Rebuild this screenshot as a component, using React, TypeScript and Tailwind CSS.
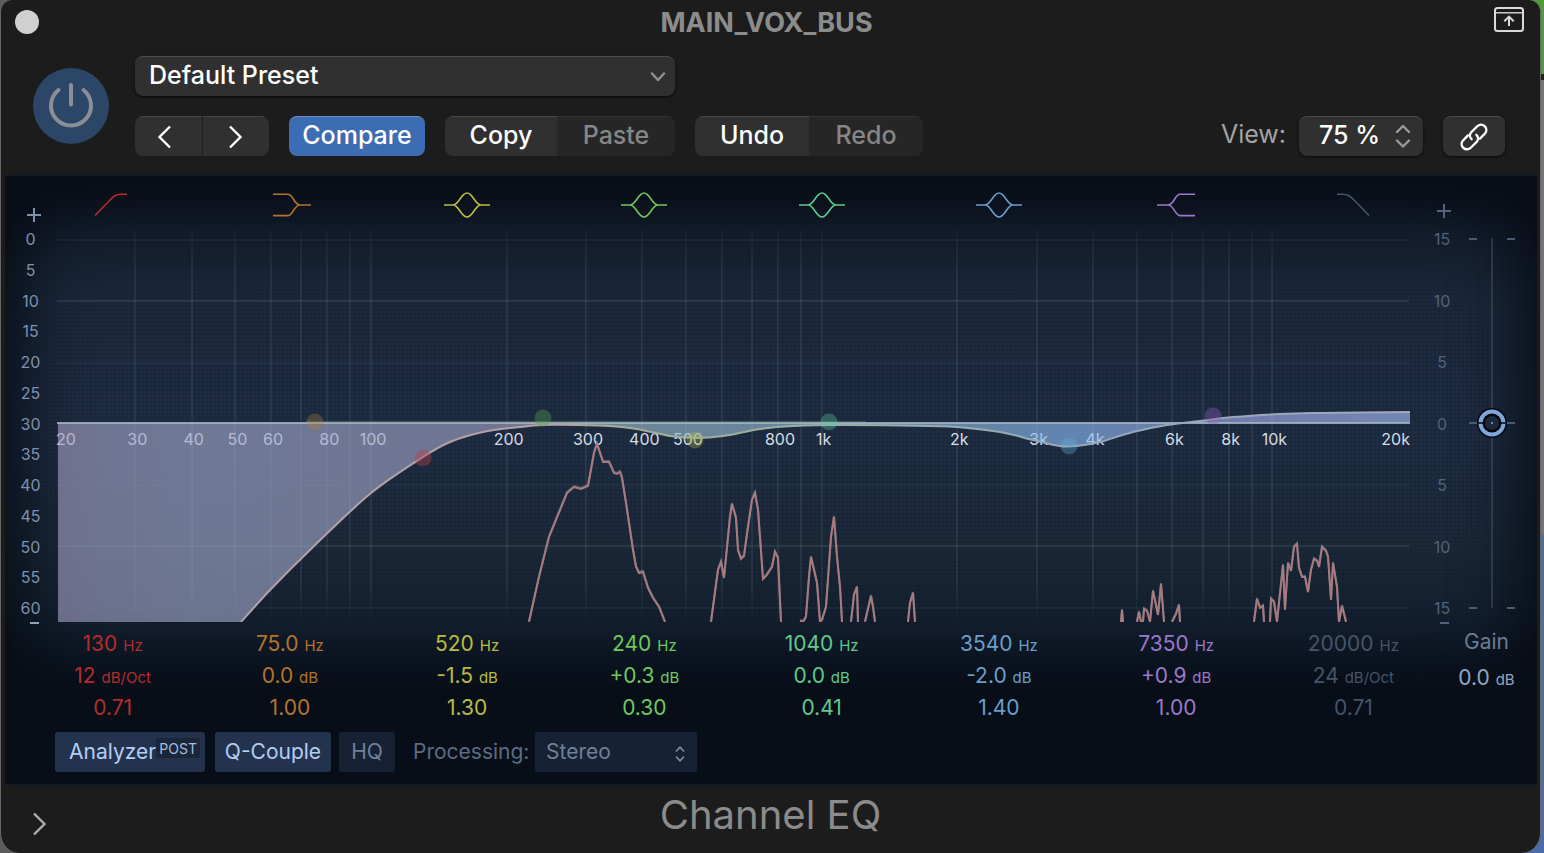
import { useState } from "react";
import type { ReactNode } from "react";

type Point = [number, number];

// Plot is drawn in a 1354 x 392 box, three decades wide (20 Hz - 20 kHz)
const PLOT_W = 1354;
const PLOT_H = 392;
const ZERO_Y = 193;

const freqX = (f: number) => (Math.log10(f / 20) / 3) * 1352;

const gridFreqs = [
  30, 40, 50, 60, 70, 80, 90, 100, 200, 300, 400, 500, 600, 700, 800, 900, 1000,
  2000, 3000, 4000, 5000, 6000, 7000, 8000, 9000, 10000,
];

const freqLabels = [
  30, 40, 50, 60, 80, 100, 200, 300, 400, 500, 800, 1000, 2000, 3000, 4000, 6000, 8000, 10000,
];

const leftScale = [0, 5, 10, 15, 20, 25, 30, 35, 40, 45, 50, 55, 60];
const rightScale = [15, 10, 5, 0, 5, 10, 15];

const bands = [
  { shape: "lowcut", color: "text-[#b32d2d]", freq: "130", gain: "12", unit: "dB/Oct", q: "0.71" },
  { shape: "lowshelf", color: "text-[#b5742c]", freq: "75.0", gain: "0.0", unit: "dB", q: "1.00" },
  { shape: "bell", color: "text-[#b9bd42]", freq: "520", gain: "-1.5", unit: "dB", q: "1.30" },
  { shape: "bell", color: "text-[#6fc95a]", freq: "240", gain: "+0.3", unit: "dB", q: "0.30" },
  { shape: "bell", color: "text-[#5fc98f]", freq: "1040", gain: "0.0", unit: "dB", q: "0.41" },
  { shape: "bell", color: "text-[#6a9fcb]", freq: "3540", gain: "-2.0", unit: "dB", q: "1.40" },
  { shape: "highshelf", color: "text-[#9b78cc]", freq: "7350", gain: "+0.9", unit: "dB", q: "1.00" },
  { shape: "highcut", color: "text-[#465468]", freq: "20000", gain: "24", unit: "dB/Oct", q: "0.71" },
];

const handles = [
  { x: 259, y: 192, color: "#b5803c", opacity: 0.32 },
  { x: 367, y: 228, color: "#b84048", opacity: 0.4 },
  { x: 487, y: 188, color: "#4f9a4a", opacity: 0.4 },
  { x: 639, y: 210, color: "#b9bd42", opacity: 0.32 },
  { x: 773, y: 192, color: "#5fc9a0", opacity: 0.34 },
  { x: 1013, y: 216, color: "#6aaedb", opacity: 0.34 },
  { x: 1157, y: 186, color: "#8a60b8", opacity: 0.38 },
];

// Sum of all bands
const curve: Point[] = [
  [185, 392], [215, 359], [257, 317], [315, 263], [367, 227], [394, 212], [427, 202], [464, 197],
  [487, 195], [521, 195], [554, 196], [581, 199], [614, 206], [641, 208], [667, 206], [704, 199],
  [737, 196], [787, 195], [874, 196], [901, 197], [944, 202], [977, 210], [1004, 216], [1021, 216],
  [1044, 212], [1077, 202], [1111, 195], [1144, 191], [1177, 187], [1224, 184], [1264, 183], [1354, 182],
];

const spectrum: string[] = [
  "473,392 483,347 493,307 511,263 518,257 525,259 532,256 538,223 541,214 547,232 553,232 558,243 561,244 564,242 566,248 570,273 577,320 580,337 583,343 587,342 592,358 597,368 603,377 609,392",
  "655,392 662,340 665,332 668,348 674,287 676,274 680,288 682,320 685,329 688,326 692,297 696,270 699,263 702,280 707,349 710,346 716,337 719,322 722,328 725,392",
  "744,391 747,392 750,387 753,347 755,327 761,353 764,392 766,390 770,377 775,307 778,287 781,327 784,357 786,392",
  "795,392 798,365 801,357 802,392",
  "809,392 815,366 817,377 819,392",
  "852,392 854,373 857,363 859,392",
  "1065,392 1066,380 1067,392",
  "1081,392 1083,382 1085,392 1087,392 1088,379 1091,381 1094,392 1097,361 1102,385 1105,354 1108,392",
  "1116,392 1120,384 1123,375 1124,392",
  "1198,392 1201,369 1204,378 1207,376 1208,392",
  "1214,392 1215,369 1218,372 1221,392 1227,335 1229,380 1232,333 1235,341 1238,317 1241,314 1243,338 1246,347 1249,347 1252,362 1255,340 1258,329 1261,331 1263,337 1266,317 1270,321 1272,327 1275,370 1277,333 1281,357 1283,392 1286,376 1290,392",
];

function labelFor(f: number) {
  return f >= 1000 ? `${f / 1000}k` : `${f}`;
}

// Catmull-Rom through the points, written as cubic segments
function smooth(points: Point[]) {
  return points
    .slice(1)
    .map((p, i) => {
      const p0 = points[Math.max(i - 1, 0)];
      const p1 = points[i];
      const p3 = points[Math.min(i + 2, points.length - 1)];
      const c1 = [p1[0] + (p[0] - p0[0]) / 6, p1[1] + (p[1] - p0[1]) / 6];
      const c2 = [p[0] - (p3[0] - p1[0]) / 6, p[1] - (p3[1] - p1[1]) / 6];
      return `C${c1.join(" ")} ${c2.join(" ")} ${p.join(" ")}`;
    })
    .join("");
}

function BandIcon({ shape }: { shape: string }) {
  const props = { fill: "none", stroke: "currentColor", strokeWidth: 1.6, height: 26 };
  if (shape === "lowcut")
    return <svg width="38" viewBox="0 0 38 26" {...props}><path d="M1 23.5 15 9C20 4 22 2.3 27 2.3H33" /></svg>;
  if (shape === "highcut")
    return <svg width="34" viewBox="0 0 34 26" {...props}><path d="M33 23.5 19 9C14 4 12 2.3 7 2.3H1" /></svg>;
  if (shape === "lowshelf")
    return (
      <svg width="44" viewBox="-4 0 44 26" {...props}>
        <path d="M1 2.3H16C21 2.3 22 13 28 13H39M1 23.6H16C21 23.6 22 13 28 13" />
      </svg>
    );
  if (shape === "highshelf")
    return (
      <svg width="40" viewBox="0 0 40 26" {...props}>
        <path d="M39 2.3H24C19 2.3 18 13 12 13H1M39 23.6H24C19 23.6 18 13 12 13" />
      </svg>
    );
  return (
    <svg width="46" viewBox="0 0 46 26" {...props}>
      <path d="M0 13H9C15 13 17 1 23 1S31 13 37 13H46M9 13C15 13 17 25 23 25S31 13 37 13" />
    </svg>
  );
}

function Segment({ children, label, dim }: { children: ReactNode; label?: string; dim?: boolean }) {
  return (
    <button
      aria-label={label}
      className={
        dim
          ? "flex h-10 flex-1 items-center justify-center border-t border-[#333] bg-[#262626] pb-[2px] text-[#868686]"
          : "flex h-10 flex-1 items-center justify-center border-t border-[#474747] bg-[#303030] pb-[2px] text-white"
      }
    >
      {children}
    </button>
  );
}

function Header() {
  const [preset, setPreset] = useState("Default Preset");
  return (
    <div className="flex gap-[26px] pt-3 pr-[35px] pl-8 text-[25px] font-medium">
      <button aria-label="Power" className="mt-3 flex size-[76px] items-center justify-center rounded-full bg-[#2c4668]">
        <svg width="48" height="48" viewBox="0 0 48 48" fill="none" stroke="#8b8f95" strokeWidth="4" strokeLinecap="round">
          <path d="M24 3V22.5M11.5 8A20 20 0 1 0 36.5 8" />
        </svg>
      </button>
      <div className="flex flex-1 flex-col gap-5">
        <div className="relative w-[540px]">
          <select
            aria-label="Preset"
            value={preset}
            onChange={(e) => setPreset(e.target.value)}
            className="h-10 w-full appearance-none rounded-lg border-t border-[#4c4c4c] bg-[#303030] pb-[2px] pl-[14px] text-white shadow-sm shadow-black/60"
          >
            <option>Default Preset</option>
          </select>
          <svg className="pointer-events-none absolute top-4 right-[9px]" width="16" height="10" viewBox="0 0 16 10" fill="none" stroke="#929292" strokeWidth="2.4" strokeLinecap="round" strokeLinejoin="round">
            <path d="M2 1.5 8 8 14 1.5" />
          </svg>
        </div>
        <div className="flex items-center gap-5">
          <div className="flex w-[134px] gap-px overflow-hidden rounded-lg bg-[#202020]">
            <Segment label="Previous preset">
              <svg width="16" height="24" viewBox="0 0 16 24" fill="none" stroke="currentColor" strokeWidth="2.4" className="mt-[2px] ml-[-8px]">
                <path d="M14 1.5 3.5 12 14 22.5" />
              </svg>
            </Segment>
            <Segment label="Next preset">
              <svg width="16" height="24" viewBox="0 0 16 24" fill="none" stroke="currentColor" strokeWidth="2.4" className="mt-[2px]">
                <path d="M2 1.5 12.500 12 2 22.5" />
              </svg>
            </Segment>
          </div>
          <button className="h-10 w-[136px] rounded-lg border-t border-[#6a90c8] bg-[#3c6cb4] pb-[2px] text-white">Compare</button>
          <div className="grid w-[230px] grid-cols-[112px_118px] overflow-hidden rounded-lg">
            <Segment>Copy</Segment>
            <Segment dim>Paste</Segment>
          </div>
          <div className="grid w-[228px] grid-cols-2 overflow-hidden rounded-lg">
            <Segment>Undo</Segment>
            <Segment dim>Redo</Segment>
          </div>
          <div className="ml-auto flex items-center gap-[13px]">
            <label htmlFor="view" className="pb-[2px] font-normal text-[#a3a3a3]">View:</label>
            <div className="relative">
              <select
                id="view"
                className="h-10 w-[124px] appearance-none rounded-lg border-t border-[#4c4c4c] bg-[#303030] pb-[2px] pl-5 text-white shadow-sm shadow-black/60"
              >
                <option>75 %</option>
              </select>
              <svg className="pointer-events-none absolute top-2 right-3" width="16" height="24" viewBox="0 0 16 24" fill="none" stroke="#9a9a9a" strokeWidth="2.4" strokeLinecap="round" strokeLinejoin="round">
                <path d="M2 8 8 2 14 8M2 16.5 8 22.5 14 16.5" />
              </svg>
            </div>
          </div>
          <button aria-label="Link" className="flex h-10 w-[62px] items-center justify-center rounded-lg border-t border-[#4c4c4c] bg-[#303030] text-white shadow-sm shadow-black/60">
            <svg width="28" height="28" viewBox="0 0 28 28" fill="none" stroke="currentColor" strokeWidth="2.400" strokeLinecap="round">
              <path d="M11.600 16.200A5 5 0 0 1 11 9.500L17 3.500A5 5 0 0 1 25 10.500L20 15.600" />
              <path d="M16.400 11.800A5 5 0 0 1 17 18.500L11 24.500A5 5 0 0 1 3 17.500L8 12.400" />
            </svg>
          </button>
        </div>
      </div>
    </div>
  );
}

function Plot() {
  const line = `M${curve[0].join(" ")}${smooth(curve)}`;
  return (
    <div className="relative mt-3 h-[392px]">
      <svg className="block h-full w-full" viewBox={`0 0 ${PLOT_W} ${PLOT_H}`} preserveAspectRatio="none">
        <defs>
          <linearGradient id="gridFade" gradientUnits="userSpaceOnUse" x1="0" y1="0" x2="0" y2={PLOT_H}>
            <stop offset="0" stopColor="#8fa3b8" stopOpacity="0.04" />
            <stop offset="0.1" stopColor="#8fa3b8" stopOpacity="0.11" />
            <stop offset="0.9" stopColor="#8fa3b8" stopOpacity="0.11" />
            <stop offset="1" stopColor="#8fa3b8" stopOpacity="0" />
          </linearGradient>
        </defs>
        {gridFreqs.map((f) => (
          <rect key={f} x={Math.round(freqX(f)) - 1} y="0" width="2" height={PLOT_H} fill="url(#gridFade)" />
        ))}
        {[9, 70, 132, 254, 315, 377].map((y) => (
          <rect key={y} x="1" y={y} width="1352" height="2" fill="#8fa3b8" opacity={y === 70 || y === 315 ? 0.14 : 0.06} />
        ))}
      </svg>
      <div className="absolute inset-x-0 top-[199px] h-5 text-[16px] leading-5 text-[#d7dbe2]">
        <span className="absolute left-0">20</span>
        {freqLabels.map((f) => (
          <span key={f} className="absolute -translate-x-1/2" style={{ left: `${((freqX(f) + 2) / PLOT_W) * 100}%` }}>
            {labelFor(f)}
          </span>
        ))}
        <span className="absolute right-0">20k</span>
      </div>
      <svg className="absolute inset-0 h-full w-full" viewBox={`0 0 ${PLOT_W} ${PLOT_H}`} preserveAspectRatio="none">
        <defs>
          <linearGradient id="sumFill" gradientUnits="userSpaceOnUse" x1="0" y1="0" x2={PLOT_W} y2="0">
            <stop offset="0" stopColor="#a39fc2" />
            <stop offset="0.1" stopColor="#a1a9cc" />
            <stop offset="0.33" stopColor="#a3a3c6" />
            <stop offset="0.42" stopColor="#9dbcd0" />
            <stop offset="0.6" stopColor="#93bcd8" />
            <stop offset="0.75" stopColor="#8bbbf5" />
            <stop offset="0.85" stopColor="#a4acf0" />
            <stop offset="1" stopColor="#a8bffa" />
          </linearGradient>
          <linearGradient id="sumLine" gradientUnits="userSpaceOnUse" x1="0" y1="0" x2={PLOT_W} y2="0">
            <stop offset="0" stopColor="#ada3a8" />
            <stop offset="0.34" stopColor="#b3a0a6" />
            <stop offset="0.44" stopColor="#a3ad96" />
            <stop offset="0.6" stopColor="#97aea8" />
            <stop offset="0.8" stopColor="#93a8ba" />
            <stop offset="1" stopColor="#a4a8b8" />
          </linearGradient>
        </defs>
        <path d={`M2 ${ZERO_Y}V392H185${smooth(curve)}V${ZERO_Y}Z`} fill="url(#sumFill)" opacity="0.62" />
        <rect x="250" y="191" width="560" height="1" fill="#4f7a50" opacity="0.6" />
        <rect x="1" y="192" width="1353" height="2" fill="#a3b6c4" opacity="0.85" />
        <path d={line} fill="none" stroke="url(#sumLine)" strokeWidth="2" />
        {spectrum.map((points) => (
          <g key={points} fill="none" strokeWidth="2" strokeLinejoin="miter">
            <polyline points={points} stroke="#71808c" opacity="0.7" transform="translate(0 -1)" />
            <polyline points={points} stroke="#a87a7e" />
          </g>
        ))}
        {handles.map((h) => (
          <circle key={h.x} cx={h.x} cy={h.y} r="8.500" fill={h.color} opacity={h.opacity} />
        ))}
      </svg>
    </div>
  );
}

function GainFader() {
  const [gain, setGain] = useState(0);
  const y = 186 - gain * 12.3;
  return (
    <div className="relative h-[372px] w-12">
      <svg width="48" height="372" viewBox="0 0 48 372" fill="none">
        <path d="M24 1V371" stroke="#8fa3b8" strokeOpacity="0.2" strokeWidth="2" />
        <path d="M1 2H9M39 2H47M1 186H47M1 371H9M39 371H47" stroke="#4b5c72" strokeWidth="2" />
        <circle cx="24" cy={y} r="15" fill="#05080d" />
        <circle cx="24" cy={y} r="11.500" stroke="#7ea6db" strokeWidth="4" />
        <circle cx="24" cy={y} r="7" fill="#1c2839" />
        <path d={`M9 ${y}H17M31 ${y}H39`} stroke="#05080d" strokeWidth="1.500" />
        <circle cx="24" cy={y} r="1" fill="#7ea6db" />
      </svg>
      <input
        type="range"
        aria-label="Gain"
        min={-15}
        max={15}
        step={0.1}
        value={gain}
        onChange={(e) => setGain(Number(e.target.value))}
        className="absolute inset-0 h-full w-full opacity-0 [direction:rtl] [writing-mode:vertical-lr]"
      />
    </div>
  );
}

function Equalizer() {
  return (
    <div className="relative mr-[3px] ml-1 h-[610px] overflow-hidden border-y border-[#0c1a2c] bg-[#070e18]">
      <div className="absolute inset-x-0 top-0 h-[524px] rounded-[90px] bg-[linear-gradient(to_bottom,#0a0f18_0%,#141e2d_11%,#1b283b_24%,#1e2c42_50%,#1a2838_70%,#131f2e_85%,#080f19_100%)]" />
      <div className="absolute inset-x-0 top-0 h-[524px] bg-[radial-gradient(#0a1220_1px,transparent_1px)] bg-[size:4px_4px] opacity-20" />
      <div className="absolute inset-x-0 top-0 h-[524px] rounded-[90px] shadow-[inset_0_0_60px_20px_#080e17]" />
      <div className="relative flex">
        <div className="flex w-[51px] flex-col items-center pt-[28px] text-[16px] leading-5 text-[#7f91ad]">
          <span className="flex h-[25px] w-full justify-end pr-[15px]">
            <svg width="14" height="25" viewBox="0 0 14 25" stroke="currentColor" strokeWidth="2"><path d="M0 11H14M7 4V18" /></svg>
          </span>
          <div className="flex h-[389px] flex-col items-center justify-between">
            {leftScale.map((n) => (
              <span key={n}>{n}</span>
            ))}
          </div>
          <span className="mt-[4px] ml-[7px] h-[2px] w-[9px] bg-[#8fa3bb]" />
        </div>
        <div className="flex-1">
          <div className="-mx-8 grid h-[42px] grid-cols-8 items-end">
            {bands.map((b, i) => (
              <button key={i} aria-label={`Band ${i + 1}`} className={`flex justify-center ${b.color}`}>
                <BandIcon shape={b.shape} />
              </button>
            ))}
          </div>
          <Plot />
          <div className="-mx-8 mt-[6px] grid grid-cols-8">
            {bands.map((b, i) => (
              <div key={i} className={`text-center text-[21px] leading-8 ${b.color}`}>
                <div>{b.freq} <span className="text-[15px] leading-none">Hz</span></div>
                <div>{b.gain} <span className="text-[15px] leading-none">{b.unit}</span></div>
                <div>{b.q}</div>
              </div>
            ))}
          </div>
        </div>
        <div className="w-[127px] pt-[28px] text-[16px] leading-5 text-[#52637b]">
          <svg className="ml-[27px] h-[25px]" width="14" viewBox="0 0 14 25" stroke="currentColor" strokeWidth="2"><path d="M0 7H14M7 0V14" /></svg>
          <div className="flex">
            <div className="flex h-[389px] w-[58px] flex-col items-center justify-between pl-[6px]">
              {rightScale.map((n, i) => (
                <span key={i}>{n}</span>
              ))}
            </div>
            <div className="pt-2">
              <GainFader />
            </div>
          </div>
          <div className="mt-[4px] ml-[30px] h-[2px] w-[9px] bg-[#52637b]" />
          <div className="pr-1 pl-[30px] text-center text-[21px] leading-9">
            <div className="text-[#6b7c93]">Gain</div>
            <div className="text-[#93a6c2]">0.0 <span className="text-[15px] leading-none">dB</span></div>
          </div>
        </div>
      </div>
      <div className="relative mt-2 flex h-10 items-center pl-[50px] text-[21px]">
        <button className="relative h-full w-[150px] rounded-[3px] bg-[#23334d] pl-[14px] text-left text-[#b3cdf5]">
          Analyzer
          <span className="absolute top-[6px] right-[5px] h-5 rounded-[3px] bg-[#1a273a] px-[3px] text-[14px] leading-[22px] text-[#a6bde0]">POST</span>
        </button>
        <button className="ml-[10px] h-full w-[116px] rounded-[3px] bg-[#23334d] text-[#b3cdf5]">Q-Couple</button>
        <button className="ml-2 h-full w-14 rounded-[3px] bg-[#162233] text-[#6f809a]">HQ</button>
        <label htmlFor="processing" className="ml-[18px] w-[122px] text-[#5c6c83]">Processing:</label>
        <div className="relative h-full">
          <select id="processing" className="h-full w-[162px] appearance-none rounded-[3px] bg-[#162233] pl-[11px] text-[#6f809a]">
            <option>Stereo</option>
          </select>
          <svg className="pointer-events-none absolute top-[14px] right-3" width="10" height="16" viewBox="0 0 10 16" fill="none" stroke="#8394ae" strokeWidth="1.500">
            <path d="M1 5.500 5 1.200 9 5.500M1 10.500 5 14.800 9 10.500" />
          </svg>
        </div>
      </div>
    </div>
  );
}

export default function App() {
  return (
    <div className="min-h-screen bg-[linear-gradient(to_right,#5c5c5c_50%,transparent_50%),linear-gradient(to_bottom,#4f9a3d_0,#4f9a3d_74px,#222_74px,#222_80px,#747474_80px,#747474_535px,#4a6da8_535px)] pr-[3px] font-['Inter','Liberation_Sans',sans-serif]">
      <div className="flex min-h-screen flex-col overflow-hidden rounded-t-xl rounded-b-[20px] border-x border-[#666] bg-[#1c1c1c]">
        <div className="flex h-11 items-center justify-between pr-4 pl-[14px]">
          <button aria-label="Close" className="size-6 rounded-full bg-[#d0d0d0]" />
          <h1 className="pt-[2px] text-[27px] font-bold text-[#8c8c8c]">MAIN_VOX_BUS</h1>
          <button aria-label="Detach window" className="mb-[5px]">
            <svg width="30" height="25" viewBox="0 0 30 25" fill="none" stroke="#dadada" strokeWidth="2">
              <rect x="1" y="1" width="28" height="23" rx="2.500" />
              <path d="M1 5.800H29" strokeWidth="1.400" />
              <path d="M15 19V10M10.300 14.200 15 9.600 19.700 14.200" />
            </svg>
          </button>
        </div>
        <div className="h-[131px]">
          <Header />
        </div>
        <Equalizer />
        <div className="relative flex flex-1 items-start justify-center">
          <button aria-label="Show extended parameters" className="absolute top-[27px] left-[30px]">
            <svg width="16" height="24" viewBox="0 0 16 24" fill="none" stroke="#adadad" strokeWidth="2.400">
              <path d="M3 1.500 13.500 12 3 22.500" />
            </svg>
          </button>
          <h2 className="text-[40px] leading-[60px] text-[#8b8b8b]">Channel EQ</h2>
        </div>
      </div>
    </div>
  );
}
